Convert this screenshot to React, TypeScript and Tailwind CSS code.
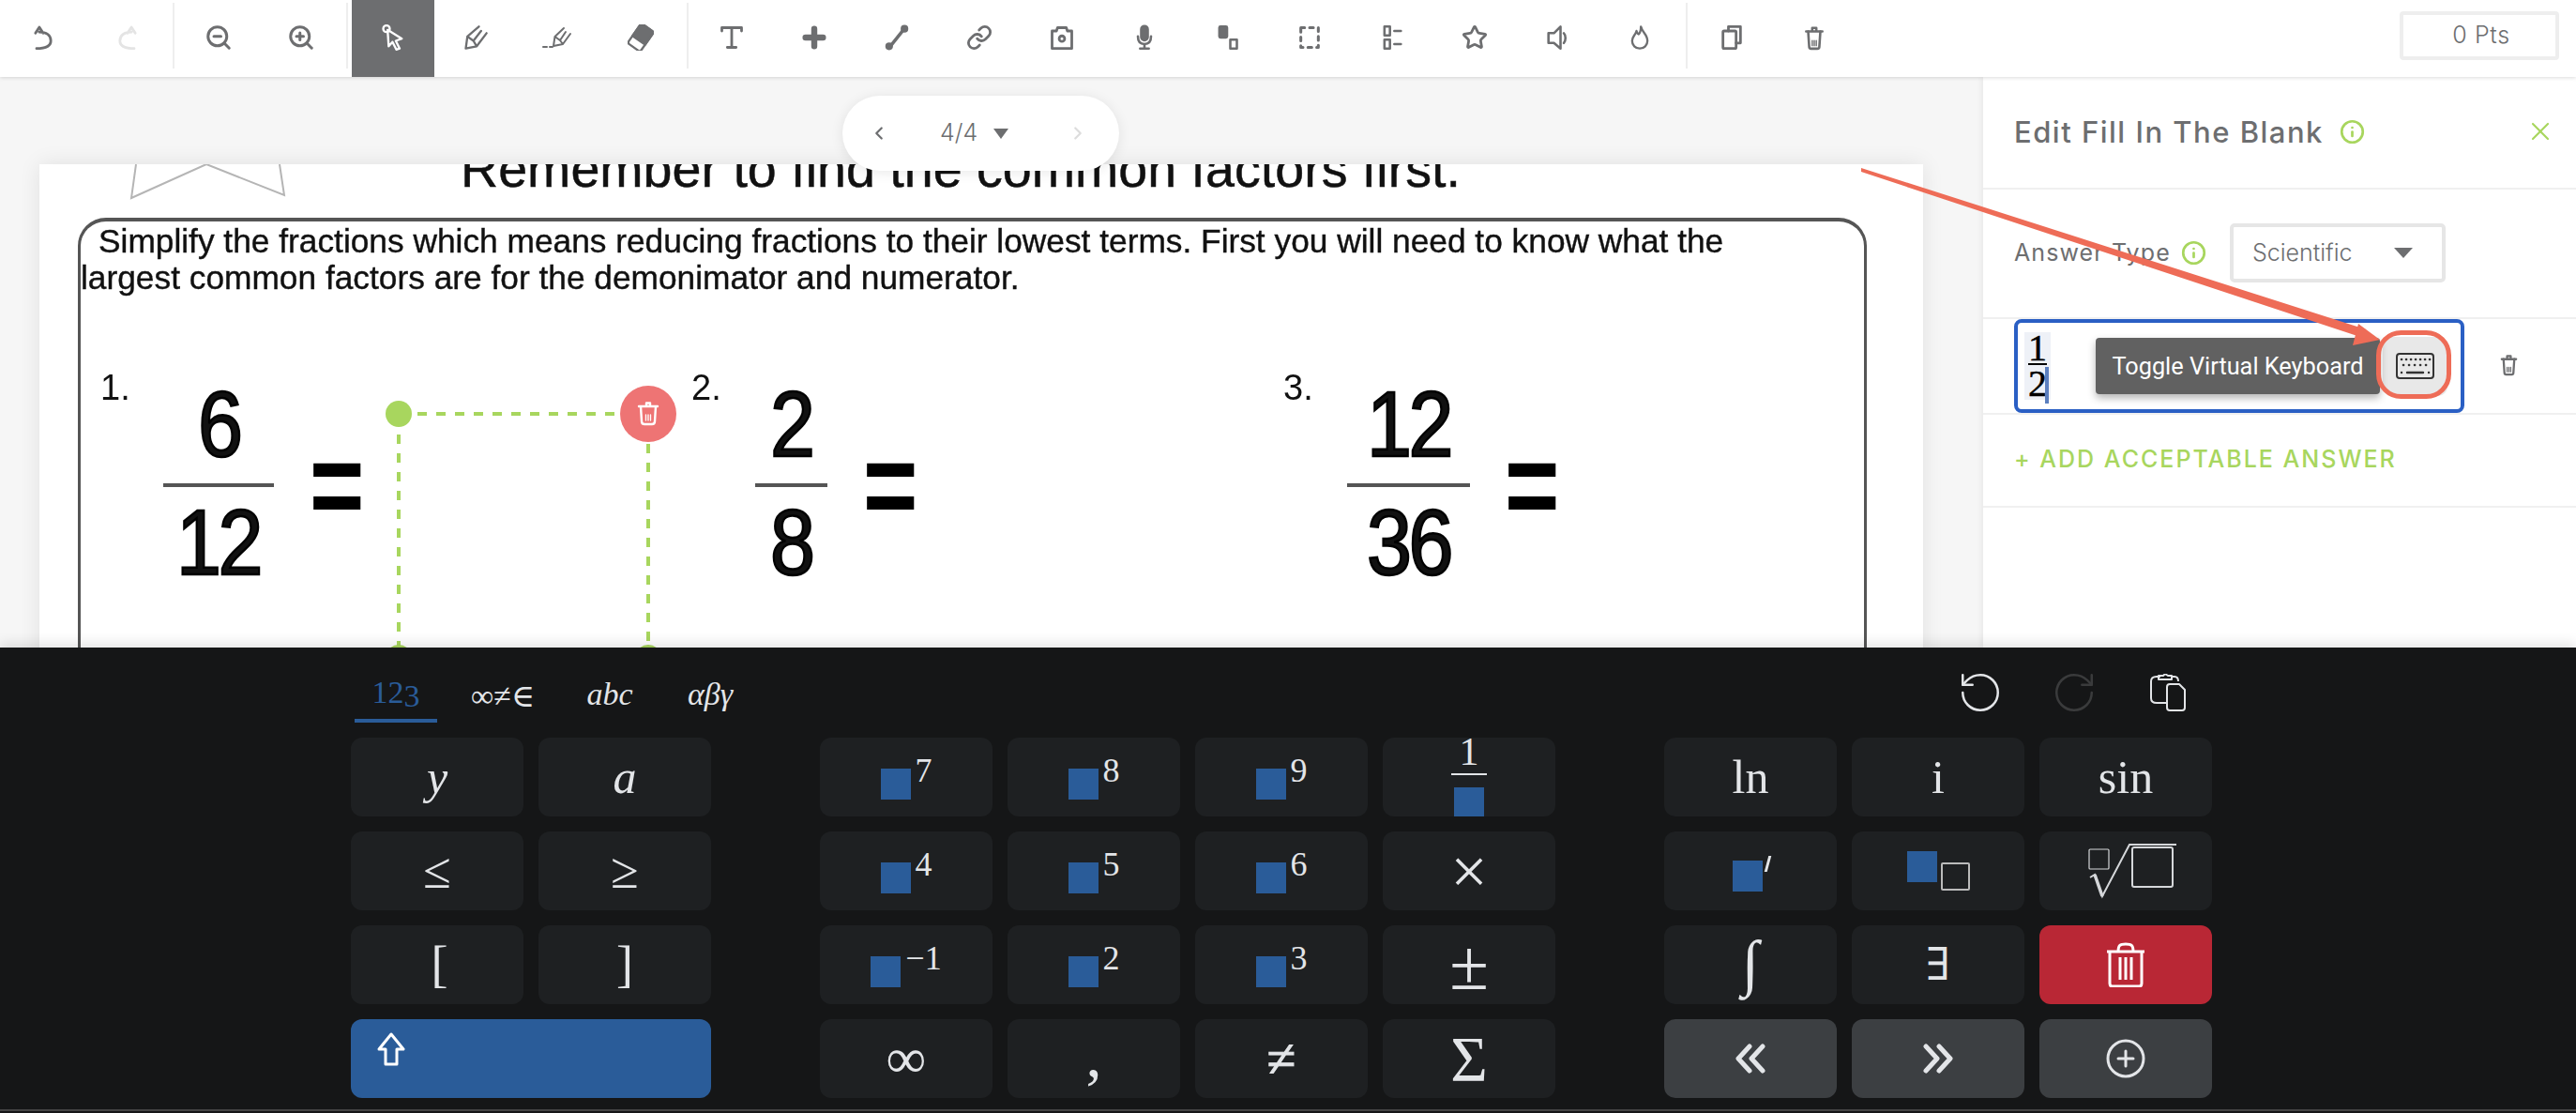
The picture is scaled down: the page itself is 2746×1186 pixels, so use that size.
import React from "react";
import { ZoomIn, ZoomOut, Link, Star, ChevronLeft, ChevronRight, RotateCcw, RotateCw, Info, X } from "lucide-react";

const Ico = ({ children, w = 28, h = 28, vb = "0 0 24 24", sw = 2.4 }: any) => (
  <svg width={w} height={h} viewBox={vb} fill="none" stroke="currentColor" strokeWidth={sw} strokeLinejoin="round" strokeLinecap="round">
    {children}
  </svg>
);

const TrashIcon = ({ w = 26, h = 28 }: any) => (
  <Ico w={w} h={h}>
    <path d="M4 6H20M10 5V2.5H14V5" />
    <path d="M6 6L7 21C7 22.5 8 23 9 23H15C16 23 17 22.5 17 21L18 6" />
    <path d="M10 15V20M12 15V20M14 15V20" strokeWidth={1.3} />
  </Ico>
);

const T = ({ children, className = "" }: any) => (
  <div className={`flex h-[82px] w-[88px] shrink-0 items-center justify-center pb-[2px] text-[#6d6e70] ${className}`}>{children}</div>
);
const Sep = ({ className = "" }: any) => <div className={`mt-[3px] h-[70px] w-[2px] shrink-0 self-start bg-[#eeeeee] ${className}`} />;

function Toolbar() {
  return (
    <div className="relative z-20 flex h-[82px] shrink-0 bg-white pl-[2px] shadow-[0_1px_4px_rgba(0,0,0,0.14)]">
      <T><Ico><path d="M5 8L8.5 2.5L12 8M8.5 7C15 7 19 10 19 15C19 20 14 22 6 22" /></Ico></T>
      <T className="ml-[2px] text-[#e4e4e4]"><Ico><path d="M19 8L15.5 2.5L12 8M15.5 7C9 7 5 10 5 15C5 20 10 22 18 22" /></Ico></T>
      <Sep className="ml-[4px] mr-[3px]" />
      <T><ZoomOut size={30} strokeWidth={2.4} /></T>
      <T><ZoomIn size={30} strokeWidth={2.4} /></T>
      <Sep className="ml-[4px] mr-[4px]" />
      <T className="bg-[#6d6e70] text-white"><Ico sw={2}><circle cx="6" cy="4" r="3" /><path d="M7 5L20 13L14.5 15L18 22L15 23L11.5 16L8 20Z" /></Ico></T>
      <T><Ico sw={2}><path d="M3 22L4.5 11L15 2M3 22L13 20L22 8M4.5 11L10 15L13 20M10 15L17 6" /></Ico></T>
      <T><Ico w={34} h={28} vb="0 0 34 24" sw={2}><path d="M12 21L13.5 11L23 2M12 21L22 19L30 8M13.5 11L19 15L22 19M19 15L25 6" /><path d="M1 22H5M8 22H11" /></Ico></T>
      <T><Ico sw={2}><g transform="rotate(35 12 12)"><rect x="5" y="1" width="14" height="22" rx="2" /><path d="M5 3C5 2 6 1 7 1H17C18 1 19 2 19 3V15H5Z" fill="currentColor" /></g></Ico></T>
      <Sep className="ml-[5px] mr-[2px]" />
      <T><Ico><path d="M3 6V3H21V6M12 3V21M8 21H16" /></Ico></T>
      <T><Ico sw={5.5}><path d="M12 4V20M4 12H20" /></Ico></T>
      <T><Ico sw={3}><path d="M6 20L18 5" /><circle cx="5" cy="20" r="2" fill="currentColor" /><circle cx="19" cy="4" r="2" fill="currentColor" /></Ico></T>
      <T><Link size={28} strokeWidth={2.4} /></T>
      <T><Ico><path d="M3 6H7L8 3H16L17 6H21V22H3Z" /><circle cx="12" cy="13" r="2.5" /></Ico></T>
      <T><Ico sw={2.2}><rect x="9" y="1.5" width="6" height="13" rx="3" fill="currentColor" /><path d="M6 11C6 16 8 18 12 18C16 18 18 16 18 11M12 18V22M8 22H16" /></Ico></T>
      <T><Ico sw={2.2}><rect x="5" y="2" width="7" height="10" rx="1" fill="currentColor" /><rect x="15" y="14" width="6" height="8" /></Ico></T>
      <T><Ico sw={2.6}><rect x="4" y="3" width="16" height="18" strokeDasharray="3.5 4.5" /></Ico></T>
      <T><Ico sw={2.2}><rect x="5" y="2" width="5" height="8" /><rect x="5" y="14" width="5" height="8" /><path d="M14 6H20M14 18H20" /></Ico></T>
      <T><Star size={28} strokeWidth={2.4} /></T>
      <T><Ico sw={2.2}><path d="M4 8H9L15 2V22L9 17H4Z" /><path d="M18 8C20 10 20 15 18 17" /></Ico></T>
      <T><Ico sw={2}><path d="M13 2C14 7 19 9 19 15C19 19 16 22 12 22C8 22 5 19 5 15C5 11 8 10 9 6C10 9 11 9 11 9C13 7 13 4 13 2Z" /></Ico></T>
      <Sep className="ml-[5px] mr-[3px]" />
      <T><Ico><path d="M9 6V2H20V17H16" /><rect x="4" y="6" width="12" height="16" rx="1" /></Ico></T>
      <T><TrashIcon /></T>
      <div className="ml-auto mr-[18px] mt-[12px] flex h-[52px] w-[170px] items-center justify-center rounded-[4px] border-[4px] border-[#eeeeee] pl-[4px] text-[25px] font-light tracking-[0.6px] text-[#6d6e70]">0 Pts</div>
    </div>
  );
}

const Digit = ({ children, className = "" }: any) => (
  <div className={`h-[98px] scale-x-[0.88] text-[98px] leading-[98px] tracking-[-4px] [-webkit-text-stroke:2.5px_#000] ${className}`}>{children}</div>
);

const Problem = ({ n, a, b, numW, barW, eqGap, className = "" }: any) => (
  <div className={`flex items-start ${className}`}>
    <div className={`text-[38px] leading-[38px] ${numW}`}>{n}</div>
    <div className={`mt-[9px] flex flex-col items-center ${barW}`}>
      <Digit>{a}</Digit>
      <div className="mt-[14px] h-[4px] w-full bg-[#555555]" />
      <Digit className="mt-[10px]">{b}</Digit>
    </div>
    <div className={`mt-[72px] w-[48px] scale-y-[1.3] text-[100px] font-bold leading-[100px] text-black ${eqGap}`}>=</div>
  </div>
);

function Worksheet() {
  return (
    <div className="h-[600px] w-[2008px] overflow-hidden bg-white font-['Liberation_Sans',sans-serif] text-[#111111] shadow-[0_0_22px_rgba(0,0,0,0.09)]">
      <div className="blur-[0.6px]">
        <div className="relative h-[57px] overflow-hidden">
          <svg className="absolute left-[95px] top-0" width="175" height="50" viewBox="0 0 175 50" fill="none" stroke="#b5b5b5" strokeWidth="2">
            <path d="M8 0L3 36L83 0M83 0L166 33L161 0" />
          </svg>
          <div className="-mt-[25px] ml-[449px] whitespace-nowrap text-[55.6px] leading-[60px] [-webkit-text-stroke:0.5px_#111111]">Remember to find the common factors first.</div>
        </div>
        <div className="ml-[41px] h-[520px] w-[1907px] rounded-t-[30px] border-x-[3px] border-t-[4px] border-[#555555]">
          <div className="whitespace-nowrap pt-[1px] text-[35.3px] leading-[39px] [-webkit-text-stroke:0.4px_#111111]">
            <div className="pl-[19px]">Simplify the fractions which means reducing fractions to their lowest terms. First you will need to know what the</div>
            <div>largest common factors are for the demonimator and numerator.</div>
          </div>
          <div className="mt-[79px] flex">
            <Problem n="1." a="6" b="12" numW="ml-[21px] w-[67px]" barW="w-[118px]" eqGap="ml-[38px]" />
            <Problem n="2." a="2" b="8" numW="ml-[359px] w-[68px]" barW="w-[77px]" eqGap="ml-[38px]" />
            <Problem n="3." a="12" b="36" numW="ml-[400px] w-[68px]" barW="w-[131px]" eqGap="ml-[37px]" />
          </div>
        </div>
      </div>
    </div>
  );
}

function Canvas() {
  return (
    <div className="relative flex-1 overflow-hidden bg-[#f6f6f6] pl-[42px] pt-[93px]">
      <Worksheet />
      <svg className="absolute left-0 top-0" width="2114" height="608" viewBox="0 82 2114 608" fill="none">
        <path d="M445 441H662M425 463V690M691 473V690" stroke="#a8d65e" strokeWidth="4" strokeDasharray="10 10" />
        <circle cx="425" cy="441" r="14" fill="#a8d65e" />
        <circle cx="425" cy="701" r="14" fill="#a8d65e" />
        <circle cx="691" cy="701" r="14" fill="#a8d65e" />
        <circle cx="691" cy="441" r="30" fill="#ee7474" />
        <g transform="translate(680 428)" stroke="#ffffff" strokeWidth="2.4" strokeLinecap="round" strokeLinejoin="round">
          <path d="M1 5H21M9 4V1.5H13V4M3 5L4 21C4 23 5 24 7 24H15C17 24 18 23 18 21L19 5" />
          <path d="M8.5 14V20M11 14V20M13.5 14V20" strokeWidth="1.3" />
        </g>
      </svg>
      <div className="absolute left-[898px] top-[20px] z-10 flex h-[80px] w-[295px] items-center rounded-[40px] bg-white shadow-[0_2px_14px_rgba(0,0,0,0.09)]">
        <ChevronLeft className="ml-[28px] shrink-0 text-[#6d6e70]" size={22} strokeWidth={2.4} />
        <span className="ml-[54px] text-[25px] font-light text-[#6d6e70]">4/4</span>
        <span className="ml-[17px] h-0 w-0 border-x-[8px] border-t-[11px] border-x-transparent border-t-[#6d6e70]" />
        <ChevronRight className="ml-[63px] shrink-0 text-[#dddddd]" size={22} strokeWidth={2.4} />
      </div>
    </div>
  );
}

function Panel() {
  return (
    <div className="relative z-10 w-[632px] shrink-0 bg-white text-[#6d6e70] shadow-[-2px_0_6px_rgba(0,0,0,0.06)]">
      <div className="flex h-[120px] items-center border-b-[2px] border-[#f0f0f0] pb-[2px] pl-[33px]">
        <span className="w-[330px] whitespace-nowrap text-[31px] font-medium leading-none tracking-[1.5px]">Edit Fill In The Blank</span>
        <Info className="ml-[17px] shrink-0 text-[#a8d65e]" size={27} strokeWidth={2.4} />
        <X className="ml-auto mr-[22px] shrink-0 text-[#a8d65e]" size={32} strokeWidth={1.6} />
      </div>
      <div className="flex h-[138px] items-start border-b-[2px] border-[#f0f0f0] pl-[33px] pt-[36px]">
        <span className="mt-[14px] w-[167px] whitespace-nowrap text-[25px] leading-[34px] tracking-[1.1px]">Answer Type</span>
        <Info className="ml-[11px] mt-[18px] shrink-0 text-[#a8d65e]" size={27} strokeWidth={2.4} />
        <div className="ml-[25px] flex h-[63px] w-[230px] items-center rounded-[5px] border-[4px] border-[#e6e6e6] pl-[20px] text-[25px] font-light">
          <span className="w-[117px]">Scientific</span>
          <span className="ml-[34px] h-0 w-0 border-x-[10px] border-t-[11px] border-x-transparent border-t-[#6d6e70]" />
        </div>
      </div>
      <div className="flex h-[102px] items-start border-b-[2px] border-[#f0f0f0] pl-[33px]">
        <div className="relative flex h-[100px] w-[480px] items-center rounded-[8px] border-[4px] border-[#2a5fc4] pl-[7px]">
          <div className="relative flex h-[72px] w-[28px] flex-col items-center bg-[#eef1f7] font-['Liberation_Serif',serif] text-[40px] leading-[34px] text-black [-webkit-text-stroke:0.5px_#000]">
            <span className="h-[33px]">1</span>
            <span className="h-[2px] w-[20px] shrink-0 bg-black" />
            <span className="h-[37px] pt-[3px]">2</span>
            <span className="absolute left-[22px] top-[37px] h-[39px] w-[4px] bg-[#5b7fbf]" />
          </div>
          <div className="ml-auto mr-[14px] flex h-[63px] w-[69px] items-center justify-center rounded-[10px] bg-[#e8e8e8]">
            <svg width="41" height="28" viewBox="0 0 41 28" fill="none" stroke="#333333" strokeLinecap="round">
              <rect x="1" y="1" width="39" height="26" rx="3" strokeWidth="2" />
              <path d="M6 7H6.1M11 7H11.1M16 7H16.1M21 7H21.1M26 7H26.1M31 7H31.1M36 7H36.1M8 13H8.1M14 13H14.1M20 13H20.1M26 13H26.1M32 13H32.1" strokeWidth="2.6" />
              <path d="M12 21H29M6 21H6.1M35 21H35.1" strokeWidth="2.4" />
            </svg>
          </div>
          <div className="absolute left-[83px] top-[16px] flex h-[60px] w-[303px] items-center justify-center whitespace-nowrap rounded-[4px] bg-[#616161] pt-[2px] font-['Roboto',sans-serif] text-[25.3px] text-white shadow-[0_4px_8px_rgba(0,0,0,0.3)]">
            Toggle Virtual Keyboard
          </div>
        </div>
        <div className="ml-[36px] mt-[35px]"><TrashIcon w={23} h={27} /></div>
      </div>
      <div className="flex h-[99px] items-center border-b-[2px] border-[#f0f0f0] pb-[2px] pl-[33px] text-[25px] font-medium tracking-[2px] text-[#a8d65e]">
        + ADD ACCEPTABLE ANSWER
      </div>
    </div>
  );
}

const Key = ({ children, className = "" }: any) => (
  <div className={`flex h-[84px] items-center justify-center rounded-[12px] bg-[#1e2022] text-[#e3e5e8] ${className}`}>{children}</div>
);
const Blue = ({ className = "h-[33px]" }: any) => <span className={`block w-[32px] shrink-0 bg-[#2a5c99] ${className}`} />;
const Pow = ({ s }: any) => (
  <Key>
    <span className="mt-[5px] flex h-[43px] items-start">
      <Blue className="mt-[10px] h-[33px]" />
      <span className="-mt-[6px] ml-[5px] text-[36px] leading-[36px]">{s}</span>
    </span>
  </Key>
);
const Chev = ({ d }: any) => (
  <svg width="34" height="32" viewBox="0 0 34 32" fill="none" stroke="#e3e5e8" strokeWidth="5" strokeLinecap="round" strokeLinejoin="round">
    <path d={d} />
  </svg>
);

function Keyboard() {
  return (
    <div className="relative z-30 h-[496px] shrink-0 bg-[#151617] font-['Liberation_Serif','DejaVu_Serif',serif] shadow-[0_-5px_12px_rgba(0,0,0,0.1)]">
      <div className="flex h-[96px] pl-[378px] text-[#e3e5e8]">
        <div className="flex h-[80px] gap-[26px] text-[34px]">
          <div className="flex w-[88px] items-center justify-center border-b-[4px] border-[#2a5c99] pt-[18px] text-[#2a5c99]">
            12<span className="relative top-[4px]">3</span>
          </div>
          <div className="flex w-[88px] items-center justify-center pt-[22px]">∞≠∈</div>
          <div className="flex w-[88px] items-center justify-center pt-[18px] italic">abc</div>
          <div className="flex w-[74px] items-center justify-center pt-[18px] italic">αβγ</div>
        </div>
        <div className="ml-[1267px] mt-[28px] flex h-[40px] items-start">
          <div className="flex w-[100px] justify-center"><RotateCcw size={50} strokeWidth={1.2} className="-mt-[5px]" /></div>
          <div className="flex w-[100px] justify-center"><RotateCw size={50} strokeWidth={1.2} className="-mt-[5px] text-[#3a3b3c]" /></div>
          <div className="flex w-[100px] justify-center">
            <svg width="40" height="40" viewBox="0 0 40 40" fill="none" stroke="currentColor" strokeWidth="2" strokeLinejoin="round">
              <path d="M12 3H8C4 3 2 5 2 8V26C2 29 4 31 8 31H18" />
              <path d="M10 6V2H15L17 0L20 2H24V6Z" />
              <path d="M24 3H27C30 3 31 5 31 8" />
              <path d="M22 11H32L38 17V36C38 38 37 39 35 39H22C20 39 19 38 19 36V14C19 12 20 11 22 11Z" />
            </svg>
          </div>
        </div>
      </div>
      <div className="flex gap-[116px] pl-[374px]">
        <div className="grid w-[384px] grid-cols-2 gap-[16px]">
          <Key className="text-[50px] italic">y</Key>
          <Key className="text-[50px] italic">a</Key>
          <Key className="text-[54px]">≤</Key>
          <Key className="text-[54px]">≥</Key>
          <Key className="pl-[5px] text-[54px]">[</Key>
          <Key className="text-[54px]">]</Key>
          <div className="col-span-2 flex h-[84px] items-start rounded-[12px] bg-[#2a5c99] pl-[28px] pt-[14px]">
            <svg width="30" height="36" viewBox="0 0 30 36" fill="none" stroke="#ffffff" strokeWidth="3" strokeLinejoin="round">
              <path d="M15 2L28 18H21V34H9V18H2Z" />
            </svg>
          </div>
        </div>
        <div className="grid w-[784px] grid-cols-4 gap-[16px]">
          <Pow s="7" />
          <Pow s="8" />
          <Pow s="9" />
          <Key className="flex-col justify-start text-[42px] leading-[42px]">
            <span className="-mt-[6px]">1</span>
            <span className="mt-[2px] h-[2px] w-[38px] shrink-0 bg-[#e3e5e8]" />
            <Blue className="mt-[13px] h-[31px]" />
          </Key>
          <Pow s="4" />
          <Pow s="5" />
          <Pow s="6" />
          <Key className="text-[70px] font-light">×</Key>
          <Pow s="−1" />
          <Pow s="2" />
          <Pow s="3" />
          <Key className="text-[76px]">±</Key>
          <Key className="text-[60px]">∞</Key>
          <Key className="pb-[8px] text-[68px]">,</Key>
          <Key className="text-[56px] [-webkit-text-stroke:1px_#e3e5e8]">≠</Key>
          <Key className="text-[68px]">Σ</Key>
        </div>
        <div className="grid w-[584px] grid-cols-3 gap-[16px]">
          <Key className="text-[50px]">ln</Key>
          <Key className="text-[50px]">i</Key>
          <Key className="text-[50px]">sin</Key>
          <Key>
            <span className="mt-[5px] flex items-start">
              <Blue className="mt-[5px] h-[33px]" />
              <span className="ml-[4px] h-[17px] w-[3px] skew-x-[-15deg] bg-[#e3e5e8]" />
            </span>
          </Key>
          <Key>
            <span className="flex items-start">
              <Blue className="h-[33px]" />
              <span className="ml-[4px] mt-[12px] block h-[30px] w-[31px] rounded-[2px] border-[2px] border-[#bbbbbb]" />
            </span>
          </Key>
          <Key>
            <svg className="overflow-visible" width="100" height="60" viewBox="-8 0 100 60" fill="none" stroke="#d5d7da" strokeWidth="2">
              <rect x="3" y="7" width="21" height="21" rx="1" strokeWidth="1.2" />
              <path d="M4 37L9 34L17 57L46 2H96" />
              <path d="M9 34L17 57" strokeWidth="3.5" />
              <rect x="49" y="5" width="43" height="42" rx="2" />
            </svg>
          </Key>
          <Key className="pb-[6px] text-[66px] italic">∫</Key>
          <Key className="text-[48px]">∃</Key>
          <div className="flex h-[84px] items-center justify-center rounded-[12px] bg-[#b92735]">
            <svg width="42" height="48" viewBox="0 0 42 48" fill="none" stroke="#ffffff" strokeWidth="3" strokeLinejoin="round">
              <path d="M1 10H41M13 10C13 3 15 2 21 2C27 2 29 3 29 10" />
              <path d="M4 10V44C4 46 5 47 7 47H35C37 47 38 46 38 44V10" />
              <path d="M15 16V40M21 16V40M27 16V40" />
            </svg>
          </div>
          <div className="flex h-[84px] items-center justify-center rounded-[12px] bg-[#3c3f42]"><Chev d="M16 3L4 16L16 29M30 3L18 16L30 29" /></div>
          <div className="flex h-[84px] items-center justify-center rounded-[12px] bg-[#3c3f42]"><Chev d="M4 3L16 16L4 29M18 3L30 16L18 29" /></div>
          <div className="flex h-[84px] items-center justify-center rounded-[12px] bg-[#3c3f42] text-[#e3e5e8]">
            <svg width="42" height="42" viewBox="0 0 42 42" fill="none" stroke="currentColor" strokeWidth="3" strokeLinecap="round">
              <circle cx="21" cy="21" r="19" />
              <path d="M21 13V29M13 21H29" />
            </svg>
          </div>
        </div>
      </div>
      <div className="absolute bottom-[2px] left-0 right-0 h-[2px] bg-[#444444]" />
    </div>
  );
}

export default function App() {
  return (
    <div className="relative flex h-[1186px] w-[2746px] flex-col overflow-hidden bg-white font-['Inter',sans-serif]">
      <Toolbar />
      <div className="flex min-h-0 flex-1">
        <Canvas />
        <Panel />
      </div>
      <Keyboard />
      <svg className="pointer-events-none absolute left-0 top-0 z-40" width="2746" height="1186" viewBox="0 0 2746 1186" fill="none">
        <path d="M1984 179L2522 351L2519 360L1984 183Z" fill="#ee6c57" />
        <path d="M2537 362L2514 345L2508 368Z" fill="#ee6c57" />
        <rect x="2535.5" y="354.5" width="75" height="68" rx="24" stroke="#ee6c57" strokeWidth="5" />
      </svg>
    </div>
  );
}
